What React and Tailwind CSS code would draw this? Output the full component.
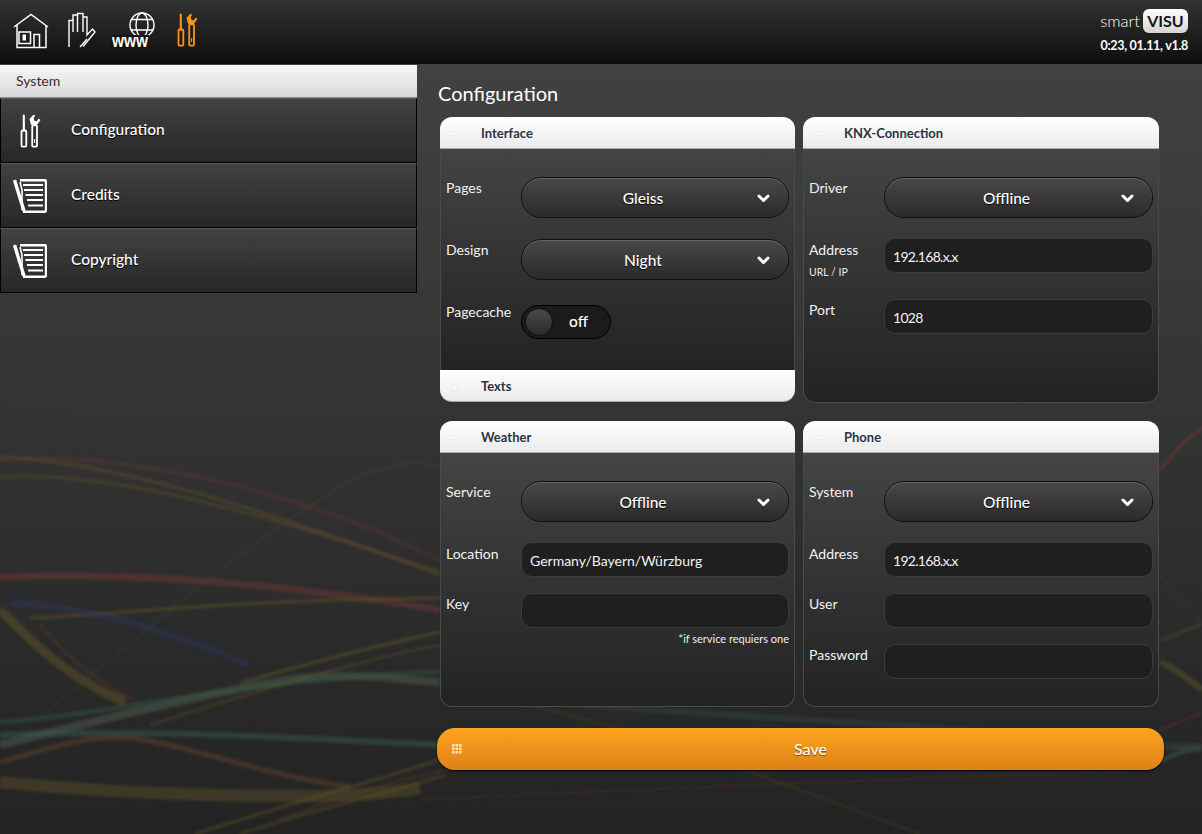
import React from 'react';

const waves = [
  { d: 'M0 410 C150 425 300 445 440 420', c: '#6a3030', w: 2, o: 0.3 },
  { d: 'M0 457 C120 462 280 515 440 575', c: '#7a6224', w: 3, o: 0.4 },
  { d: 'M0 477 C120 470 280 520 440 572', c: '#7a6224', w: 3, o: 0.35 },
  { d: 'M0 460 C120 450 300 490 440 560 C520 590 600 610 700 640', c: '#7a3a2c', w: 5, o: 0.25 },
  { d: 'M0 577 C120 572 260 580 440 610', c: '#7a3535', w: 7, o: 0.5 },
  { d: 'M30 618 C120 615 220 600 440 598', c: '#7a6224', w: 3, o: 0.45 },
  { d: 'M10 603 C60 605 130 615 250 665', c: '#28407a', w: 6, o: 0.35 },
  { d: 'M0 610 C30 640 70 680 125 702', c: '#7a6a24', w: 9, o: 0.4 },
  { d: 'M40 625 C70 660 100 685 135 700', c: '#7a3a2c', w: 3, o: 0.35 },
  { d: 'M45 712 C140 640 220 560 350 480 C400 460 420 460 440 468', c: '#4a6a40', w: 1, o: 0.5 },
  { d: 'M0 745 C120 715 220 690 300 678 C360 672 400 680 440 682', c: '#5a6a5c', w: 8, o: 0.45 },
  { d: 'M0 735 C120 730 260 735 440 745', c: '#3a6a5a', w: 6, o: 0.45 },
  { d: 'M0 722 C100 715 200 690 320 680 C380 675 420 672 440 672', c: '#3a6a48', w: 5, o: 0.4 },
  { d: 'M0 762 C60 745 90 735 130 738 C190 745 260 775 350 787', c: '#7a4a2a', w: 5, o: 0.45 },
  { d: 'M240 683 C320 660 380 645 440 632', c: '#7a6a24', w: 3, o: 0.45 },
  { d: 'M150 725 C260 690 360 660 440 645', c: '#7a6a24', w: 2, o: 0.4 },
  { d: 'M0 782 C100 792 200 796 300 796 C340 796 380 795 420 788', c: '#7a6a24', w: 12, o: 0.35 },
  { d: 'M195 834 C300 800 380 780 445 758', c: '#7a6a24', w: 3, o: 0.4 },
  { d: 'M240 834 C330 805 400 790 445 775', c: '#7a6a24', w: 3, o: 0.35 },
  { d: 'M280 820 C380 780 560 730 800 745 C900 752 1080 762 1202 745', c: '#7a4a2c', w: 3, o: 0.3 },
  { d: 'M500 700 C620 720 800 790 920 834', c: '#7a6a24', w: 2, o: 0.25 },
  { d: 'M440 690 C620 715 900 720 1202 748', c: '#3a6a5a', w: 6, o: 0.25 },
  { d: 'M420 800 C600 790 900 780 1130 770', c: '#7a3a2c', w: 2, o: 0.3 },
  { d: 'M1160 470 C1175 450 1190 436 1202 428', c: '#7a3535', w: 4, o: 0.5 },
  { d: 'M1160 575 C1175 595 1190 610 1202 622', c: '#4a6a40', w: 1, o: 0.5 },
  { d: 'M1160 640 C1175 636 1190 628 1202 624', c: '#7a6a24', w: 2, o: 0.45 },
  { d: 'M1160 662 C1175 668 1190 680 1202 690', c: '#7a6a24', w: 6, o: 0.4 },
  { d: 'M1160 730 C1175 724 1190 718 1202 712', c: '#7a3535', w: 3, o: 0.35 },
  { d: 'M1160 762 C1180 750 1190 750 1202 748', c: '#3a6a5a', w: 5, o: 0.45 },
];

const Waves = () => (
  <svg className="absolute inset-0 w-full h-full" viewBox="0 0 1202 834" fill="none" aria-hidden>
    <defs>
      <filter id="soft"><feGaussianBlur stdDeviation="1.4" /></filter>
    </defs>
    <g filter="url(#soft)" opacity="0.85">
      {waves.map((w, i) => (
        <path key={i} d={w.d} stroke={w.c} strokeWidth={w.w} strokeOpacity={w.o} />
      ))}
    </g>
  </svg>
);

const IconHouse = () => (
  <svg width="36" height="38" viewBox="12 11 36 38" fill="none" stroke="white" strokeWidth="1.5">
    <path d="M13 26 L30 13.5 L47 26" />
    <path d="M16 24 V46.5 H45 V24" />
    <rect x="18" y="31" width="11.5" height="11.5" />
    <rect x="22" y="34" width="2.5" height="5" strokeWidth="1" fill="white" />
    <path d="M33 46.5 V33.5 H38.5 V46.5" />
  </svg>
);

const IconHand = () => (
  <svg width="30" height="36" viewBox="67 12 30 36" fill="none" stroke="white" strokeWidth="1.4">
    <path d="M69 47 V20.5 H73 V32" />
    <path d="M73 20.5 V15 H77.5 V32" />
    <path d="M77.5 15 V13.5 H83 V32" />
    <path d="M83 17 H87 V35 L92.5 29 L95 32 L83 46.5" />
    <path d="M80 47 L87 39" />
  </svg>
);

const IconWww = () => (
  <svg className="overflow-visible" width="46" height="36" viewBox="110 12 46 36" fill="none" stroke="white" strokeWidth="1.4">
    <circle cx="142" cy="25" r="12" />
    <ellipse cx="142" cy="25" rx="6" ry="12" />
    <path d="M132 19.5 H152 M131 30 H153" />
    <rect x="111" y="35" width="38" height="13" fill="#141414" stroke="none" />
    <text x="112" y="46.5" fill="white" stroke="none" fontSize="18" fontWeight="700" fontFamily="'Liberation Sans', sans-serif" textLength="36" lengthAdjust="spacingAndGlyphs">www</text>
  </svg>
);

const IconTools = ({ color = 'white', className }) => (
  <svg className={className} viewBox="0 0 22 35" fill="none" stroke={color} strokeWidth="1.9">
    <path d="M4 1.2 V17" strokeWidth="2.2" strokeLinecap="round" />
    <rect x="1.6" y="17" width="5" height="16.8" rx="1" />
    <path d="M14 0.5 L10 5 L11.5 11 L17 12 L21.5 6 L19.5 4.5 L17.5 7.5 L14.8 6.5 L14.5 3.5 L16 1.5 Z" fill={color} stroke="none" />
    <rect x="12.8" y="11.5" width="5" height="22.3" rx="1" />
    <path d="M15.3 26 V30" strokeWidth="1.2" />
  </svg>
);

const IconPage = ({ className }) => (
  <svg className={className} viewBox="0 0 34 34" fill="none" stroke="white">
    <path d="M7 1.2 H31.5 Q33 1.2 33 2.7 V31.3 Q33 32.8 31.5 32.8 H10" strokeWidth="2.4" />
    <path d="M10 6 H30 M11 11 H30 M12.5 16 H30 M14 21 H30 M15 26.5 H30" strokeWidth="1.9" />
    <path d="M1.5 1 L11 32" strokeWidth="3.4" />
    <path d="M7 3 L9 11 V31" strokeWidth="1.6" />
  </svg>
);

const IconChevron = () => (
  <svg width="13" height="10" viewBox="0 0 13 10" fill="none" stroke="white" strokeWidth="3" strokeLinecap="round" strokeLinejoin="round">
    <path d="M2 3 L6.5 7.5 L11 3" />
  </svg>
);

const IconGrid = () => (
  <svg width="10" height="10" viewBox="0 0 10 10" fill="#fde3b8">
    {[0, 3.5, 7].map((y) =>
      [0, 3.5, 7].map((x) => <rect key={`${x}-${y}`} x={x} y={y} width="2.6" height="2.6" />)
    )}
  </svg>
);

const SideItem = ({ label, icon }) => (
  <div className="h-[65px] flex items-center bg-gradient-to-b from-[#424242] to-[#272727] border-t border-t-[#5c5c5c] border-b border-b-black border-x border-x-black">
    <div className="w-[70px] shrink-0 flex justify-center pr-[12px]">{icon}</div>
    <span className="pb-[1px] text-white text-[15.5px] font-medium [text-shadow:0_1px_1px_#000]">{label}</span>
  </div>
);

const PanelHead = ({ title, sign = '−', rounded = 'rounded-t-xl', pad = 'pt-[3px]' }) => (
  <div className={`h-[32px] shrink-0 flex items-center bg-gradient-to-b from-white to-[#ebebeb] border-b border-b-[#aaa] ${rounded}`}>
    <span className="w-[41px] shrink-0 pl-[10px] text-white text-[16px] font-bold [text-shadow:0_0_2px_#ccc]">{sign}</span>
    <span className={`${pad} text-[13px] font-bold text-[#2b3440]`}>{title}</span>
  </div>
);

const Panel = ({ title, children, footer }) => (
  <div className="h-[286px] flex flex-col">
    <PanelHead title={title} />
    <div className={`flex-1 px-[5px] pt-[28px] bg-gradient-to-b from-[#444444] to-[#232323] border-x border-[#4a4a4a] ${footer ? '' : 'border-b rounded-b-xl'}`}>
      {children}
    </div>
    {footer && <PanelHead title={footer} sign="+" rounded="rounded-b-xl mb-[1px]" />}
  </div>
);

const Row = ({ label, sub, gap, children, labelPad = 'pt-[1px]' }) => (
  <div className={`flex items-start ${gap}`}>
    <div className={`w-[75px] shrink-0 ${labelPad}`}>
      <div className="text-[14px] leading-[20px] font-normal text-[#f2f2f2]">{label}</div>
      {sub && <div className="text-[10.5px] leading-[14px] mt-[5px] font-normal text-[#e8e8e8]">{sub}</div>}
    </div>
    <div className="flex-1 min-w-0">{children}</div>
  </div>
);

const Select = ({ value }) => (
  <div className="relative h-[41px] flex items-center rounded-[20px] border border-[#111] bg-gradient-to-b from-[#484848] to-[#2b2b2b] shadow-[inset_0_1px_0_#666]">
    <span className="flex-1 pr-[24px] pt-[2px] text-center text-white text-[15.5px] font-medium [text-shadow:0_1px_1px_#000]">{value}</span>
    <span className="absolute right-[18px] top-[15px]"><IconChevron /></span>
  </div>
);

const Field = ({ value = '', tight }) => (
  <input
    readOnly
    value={value}
    className={`block w-full h-[35px] px-[8px] pt-[1px] rounded-[11px] border border-[#3c3c3c] bg-[#1f1f1f] text-[14px] font-normal text-[#f2f2f2] outline-none ${tight ? 'tracking-[-0.7px]' : ''}`}
  />
);

const Toggle = () => (
  <div className="w-[90px] h-[34px] flex items-center rounded-full border border-black bg-[#1b1b1b] pl-[3px]">
    <span className="w-[28px] h-[28px] rounded-full border border-[#111] bg-gradient-to-b from-[#4a4a4a] to-[#2b2b2b]" />
    <span className="flex-1 pr-[6px] text-center text-white text-[15.5px] font-medium">off</span>
  </div>
);

export default function App() {
  return (
    <div className="relative w-full h-[834px] overflow-hidden bg-gradient-to-b from-[#444444] to-[#232323] font-['Lato',sans-serif]">
      <Waves />
      <div className="relative">
        {/* Header */}
        <header className="h-[64px] flex items-start justify-between bg-gradient-to-b from-[#333333] to-[#0e0e0e]">
          <div className="flex items-start pt-[12px] pl-[13px]">
            <IconHouse />
            <div className="ml-[18px]"><IconHand /></div>
            <div className="ml-[13px]"><IconWww /></div>
            <div className="ml-[21px] pt-[1px]"><IconTools color="#f7941d" className="w-[21px] h-[34px]" /></div>
          </div>
          <div className="flex flex-col items-end pt-[9px] pr-[14px]">
            <div className="flex items-center gap-[3px]">
              <span className="text-[16.5px] font-light text-white">smart</span>
              <span className="h-[24px] w-[45px] flex items-center justify-center rounded-md bg-gradient-to-b from-white to-[#d4d4d4] text-[#12151c] text-[16px] font-bold">VISU</span>
            </div>
            <div className="mt-[2px] text-[12.5px] leading-[20px] font-bold tracking-[-0.3px] text-white">0:23, 01.11, v1.8</div>
          </div>
        </header>

        <div className="flex items-start">
          {/* Sidebar */}
          <aside className="w-[417px] shrink-0 pt-[1px]">
            <div className="h-[33px] flex items-center pl-[16px] pb-[2px] bg-gradient-to-b from-[#f7f7f7] to-[#d9d9d9] border-b border-[#888] text-[14px] text-[#333]">System</div>
            <SideItem label="Configuration" icon={<IconTools className="w-[21px] h-[34px]" />} />
            <SideItem label="Credits" icon={<IconPage className="w-[34px] h-[34px]" />} />
            <SideItem label="Copyright" icon={<IconPage className="w-[34px] h-[34px]" />} />
          </aside>

          {/* Main */}
          <main className="pl-[20px] pt-[15px]">
            <h1 className="pl-[1px] text-[20px] leading-[28px] font-normal text-white">Configuration</h1>
            <div className="mt-[10px] ml-[3px] grid grid-cols-[355px_356px] gap-x-[8px] gap-y-[18px]">
              <Panel title="Interface" footer="Texts">
                <Row label="Pages"><Select value="Gleiss" /></Row>
                <Row label="Design" gap="mt-[21px]"><Select value="Night" /></Row>
                <Row label="Pagecache" gap="mt-[25px]" labelPad="-mt-[3px]"><Toggle /></Row>
              </Panel>
              <Panel title="KNX-Connection">
                <Row label="Driver"><Select value="Offline" /></Row>
                <Row label="Address" sub="URL / IP" gap="mt-[20px]" labelPad="pt-[2px]"><Field value="192.168.x.x" tight /></Row>
                <Row label="Port" gap="mt-[20px]"><Field value="1028" tight /></Row>
              </Panel>
              <Panel title="Weather">
                <Row label="Service"><Select value="Offline" /></Row>
                <Row label="Location" gap="mt-[20px]" labelPad="pt-[2px]"><Field value="Germany/Bayern/Würzburg" /></Row>
                <Row label="Key" gap="mt-[16px]"><Field /></Row>
                <div className="mt-[3px] text-right text-[11px] leading-[16px] font-normal text-[#eee]">*if service requiers one</div>
              </Panel>
              <Panel title="Phone">
                <Row label="System"><Select value="Offline" /></Row>
                <Row label="Address" gap="mt-[20px]" labelPad="pt-[2px]"><Field value="192.168.x.x" tight /></Row>
                <Row label="User" gap="mt-[16px]"><Field /></Row>
                <Row label="Password" gap="mt-[16px]"><Field /></Row>
              </Panel>
            </div>
            <button className="mt-[21px] w-[727px] h-[42px] relative flex items-center justify-center pl-[20px] rounded-[18px] bg-gradient-to-b from-[#fda41f] to-[#dd8216] shadow-[0_1px_2px_#000] text-white text-[16px] font-medium [text-shadow:0_1px_1px_#7a4a00]">
              <span className="absolute left-[15px] top-[16px]"><IconGrid /></span>
              Save
            </button>
          </main>
        </div>
      </div>
    </div>
  );
}
